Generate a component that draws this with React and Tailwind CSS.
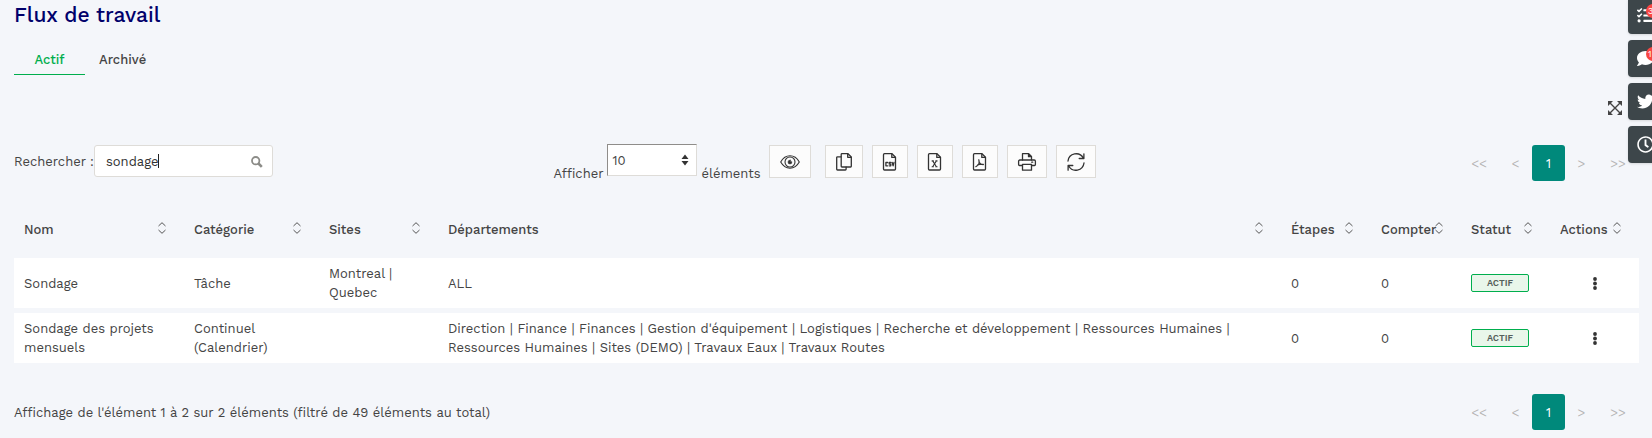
import React from "react";
import { FaTasks, FaComment, FaTwitter, FaRegClock } from "react-icons/fa";

const columns = [
  { label: "Nom", width: "w-[170px]" },
  { label: "Catégorie", width: "w-[135px]" },
  { label: "Sites", width: "w-[119px]" },
  { label: "Départements", width: "" },
  { label: "Étapes", width: "w-[90px]" },
  { label: "Compter", width: "w-[90px]" },
  { label: "Statut", width: "w-[89px]" },
  { label: "Actions", width: "w-[89px]" },
];

const rows = [
  {
    name: "Sondage",
    category: "Tâche",
    sites: "Montreal | Quebec",
    departments: "ALL",
    steps: 0,
    count: 0,
    status: "ACTIF",
  },
  {
    name: "Sondage des projets mensuels",
    category: "Continuel (Calendrier)",
    sites: "",
    departments:
      "Direction | Finance | Finances | Gestion d'équipement | Logistiques | Recherche et développement | Ressources Humaines | Ressources Humaines | Sites (DEMO) | Travaux Eaux | Travaux Routes",
    steps: 0,
    count: 0,
    status: "ACTIF",
  },
];

function Icon({ children, className = "h-5 w-5", box = "0 0 20 20", width = 1.3 }) {
  return (
    <svg
      viewBox={box}
      className={className}
      fill="none"
      stroke="currentColor"
      strokeWidth={width}
      strokeLinecap="round"
      strokeLinejoin="round"
      aria-hidden="true"
    >
      {children}
    </svg>
  );
}

const page = (
  <>
    <path d="M4.500 1.700h7.500l3.500 3.500v11.800a1 1 0 0 1-1 1h-10a1 1 0 0 1-1-1V2.700a1 1 0 0 1 1-1z" />
    <path d="M11.800 1.900v3.500h3.500" />
  </>
);

const tools = [
  {
    label: "Visibilité des colonnes",
    size: "w-[42px] mr-[5px]",
    icon: (
      <Icon width={1.1}>
        <path d="M.7 10C3 6 6.300 3.800 10 3.800S17 6 19.300 10C17 14 13.700 16.200 10 16.200S3 14 .7 10z" />
        <circle cx="10" cy="10" r="5" />
        <path d="M10.300 8.200a1.900 1.900 0 1 0 1.500 1.500c-.8.300-1.700-.5-1.500-1.500z" fill="currentColor" strokeWidth=".6" />
      </Icon>
    ),
  },
  {
    label: "Copier",
    size: "w-[38px]",
    icon: (
      <Icon>
        <path d="M8 1.700h6l3.300 3.300v9.300a.7.7 0 0 1-.7.7H8a.8.8 0 0 1-.8-.8V2.500A.8.8 0 0 1 8 1.700z" />
        <path d="M13.700 1.900v3.400h3.400" />
        <path d="M7 4.800H3.500a.8.8 0 0 0-.8.8v11.600a.8.8 0 0 0 .8.8h7.800a.8.8 0 0 0 .8-.8v-2" />
      </Icon>
    ),
  },
  {
    label: "Exporter en CSV",
    size: "w-9",
    icon: (
      <Icon>
        {page}
        <path d="M7.600 10.500H5.900v3.300h1.700M10.800 10.500H9.200v1.600h1.600v1.700H9.200M12.200 10.500l.9 3.300.9-3.300" />
      </Icon>
    ),
  },
  {
    label: "Exporter en Excel",
    size: "w-9",
    icon: (
      <Icon>
        {page}
        <path d="M7.700 8.900l3.700 5.800M11.400 8.900l-3.700 5.800M7.100 8.900h1.300M10.800 8.900h1.300M7.100 14.700h1.300M10.800 14.700h1.300" strokeWidth="1.1" />
      </Icon>
    ),
  },
  {
    label: "Exporter en PDF",
    size: "w-9",
    icon: (
      <Icon>
        {page}
        <path d="M8.800 7.700c1 3 .2 5.300-3 7M9 9.900c.8 1.800 2 2.700 4.300 2.700M7.700 12.900c1.800-.6 3.500-.9 5.700-.5" strokeWidth="1.2" />
      </Icon>
    ),
  },
  {
    label: "Imprimer",
    size: "w-10",
    icon: (
      <Icon>
        <path d="M5.500 8V1.700h6.200l2.800 2.800V8M11.500 1.900v2.800h2.800" />
        <path d="M5.500 13.500H2.600a1 1 0 0 1-1-1V9.200A1.200 1.200 0 0 1 2.800 8h14.400a1.200 1.200 0 0 1 1.200 1.200v3.300a1 1 0 0 1-1 1h-2.900" />
        <path d="M5.500 12.300h9v5.900h-9zM14.700 10.200h1" />
      </Icon>
    ),
  },
  {
    label: "Actualiser",
    size: "w-10",
    icon: (
      <Icon>
        <path d="M2 9a8.200 8.200 0 0 1 15.300-3M17.900 1.800v4.700h-4.700" />
        <path d="M18 11a8.200 8.200 0 0 1-15.300 3M2.100 18.200v-4.700h4.700" />
      </Icon>
    ),
  },
];

function Pagination({ label }) {
  const item = "h-9 text-center text-[#b4b4b4]";
  return (
    <nav aria-label={label} className="flex justify-end pr-px">
      <button type="button" aria-label="Première page" className={`${item} w-10`}>&lt;&lt;</button>
      <button type="button" aria-label="Page précédente" className={`${item} w-[33px]`}>&lt;</button>
      <button type="button" aria-current="page" className="h-9 w-[33px] rounded-[3px] bg-[#00897b] text-center text-white">1</button>
      <button type="button" aria-label="Page suivante" className={`${item} w-[33px]`}>&gt;</button>
      <button type="button" aria-label="Dernière page" className={`${item} w-10`}>&gt;&gt;</button>
    </nav>
  );
}

function SideButton({ label, badge, children }) {
  return (
    <button
      type="button"
      aria-label={label}
      className="relative flex h-[37px] w-11 items-center rounded-[4px] bg-[#3d464a] pl-[9px] text-white shadow"
    >
      {children}
      {badge && (
        <span className="absolute left-[18px] top-[7px] h-[14px] w-[14px] rounded-full bg-[#f94743] pl-[2px] text-left text-[9px] leading-[14px]">
          {badge}
        </span>
      )}
    </button>
  );
}

export default function App() {
  return (
    <div className="relative min-h-screen overflow-hidden bg-[#f4f6fa] pb-2 pl-[14px] pr-[13px] font-['Work_Sans','Inter',sans-serif] text-[13px] leading-[19px] text-[#444]">
      <h1 className="pt-px text-[21px] font-medium leading-7 text-[#00006b]">Flux de travail</h1>

      <div role="tablist" className="mt-[17px] flex">
        <button type="button" role="tab" aria-selected="true" className="w-[71px] border-b border-[#00ae4d] py-1 text-center font-medium leading-5 text-[#00ae4d]">
          Actif
        </button>
        <button type="button" role="tab" aria-selected="false" className="border-b border-transparent px-[14px] py-1 font-medium leading-5">
          Archivé
        </button>
      </div>

      <div className="mt-6 flex justify-end pr-4">
        <button type="button" aria-label="Plein écran" className="flex h-[17px] w-4 items-center justify-center">
          <svg viewBox="0 0 14 14" className="h-[14px] w-[14px]" aria-hidden="true">
            <path d="M0 0h5L0 5zM14 0v5L9 0zM0 14V9l5 5zM14 14H9l5-5z" fill="currentColor" />
            <path d="M2 2l10 10M12 2L2 12" stroke="currentColor" strokeWidth="1.400" />
          </svg>
        </button>
      </div>

      <div className="mt-7 grid grid-cols-[1fr_auto_1fr]">
        <div className="flex h-[34px] items-center">
          <label htmlFor="search">Rechercher :</label>
          <div className="relative">
            <input
              id="search"
              type="text"
              defaultValue="sondage"
              className="block h-8 w-[179px] rounded-[3px] border border-[#dedcd8] bg-white pl-[11px] pr-9 text-[#333] outline-none"
            />
            <span className="absolute left-[64px] top-[9px] h-[14px] w-px bg-[#222]" />
            <svg viewBox="0 0 12 12" className="absolute right-[10px] top-[11px] h-3 w-3" fill="none" stroke="#8c8c88" aria-hidden="true">
              <circle cx="4.700" cy="4.700" r="3.700" strokeWidth="1.800" />
              <path d="M7.500 7.500l3.300 3.300" strokeWidth="2.600" />
            </svg>
          </div>
        </div>

        <div className="flex">
          <div className="flex items-start">
            <label htmlFor="length" className="mr-1 mt-5">Afficher</label>
            <div className="relative">
              <select
                id="length"
                defaultValue="10"
                className="block h-8 w-[90px] appearance-none border border-b-[#dedcd8] border-l-[#8f8d8a] border-r-[#dedcd8] border-t-[#8f8d8a] bg-white pl-1 text-[#444] outline-none"
              >
                <option value="10">10</option>
                <option value="25">25</option>
                <option value="50">50</option>
              </select>
              <svg viewBox="0 0 8 12" className="pointer-events-none absolute right-2 top-[10px] h-3 w-2" fill="#333" aria-hidden="true">
                <path d="M4 .5l3.500 4.500h-7zM4 11.500L.5 7h7z" />
              </svg>
            </div>
            <span className="ml-1 mt-5">éléments</span>
          </div>
          <div className="ml-2 mr-1 mt-px flex gap-[9px]">
            {tools.map((tool) => (
              <button
                key={tool.label}
                type="button"
                aria-label={tool.label}
                className={`flex h-[33px] items-center justify-center border border-[#dedcd8] bg-[#fcfcfc] text-[#333] ${tool.size}`}
              >
                {tool.icon}
              </button>
            ))}
          </div>
        </div>

        <div className="pt-px">
          <Pagination label="Pagination supérieure" />
        </div>
      </div>

      <table className="mt-[17px] w-full table-fixed border-separate border-spacing-x-0 border-spacing-y-[5px]">
        <thead>
          <tr>
            {columns.map((column) => (
              <th key={column.label} scope="col" className={`h-12 p-0 pl-[10px] text-left font-medium ${column.width}`}>
                <button type="button" className="relative block w-full text-left">
                  {column.label}
                  <svg viewBox="0 0 8 12" className="absolute right-[18px] top-[2px] h-3 w-2" fill="none" stroke="#555" strokeWidth="1" aria-hidden="true">
                    <path d="M.5 4L4 .7 7.500 4M.5 8L4 11.300 7.500 8" />
                  </svg>
                </button>
              </th>
            ))}
          </tr>
        </thead>
        <tbody>
          {rows.map((row) => (
            <tr key={row.name} className="bg-white">
              <td className="py-[6px] pl-[10px] pr-3">{row.name}</td>
              <td className="py-[6px] pl-[10px] pr-3">{row.category}</td>
              <td className="py-[6px] pl-[10px] pr-3">{row.sites}</td>
              <td className="py-[6px] pl-[10px] pr-3">{row.departments}</td>
              <td className="py-[6px] pl-[10px]">{row.steps}</td>
              <td className="py-[6px] pl-[10px]">{row.count}</td>
              <td className="py-[6px] pl-[10px]">
                <span className="flex h-[18px] w-[58px] items-center justify-center rounded-[2px] border border-[#00ae4d] bg-[#e9f6ea] text-[9px] font-semibold leading-none text-[#55605a]">
                  {row.status}
                </span>
              </td>
              <td className="py-[6px]">
                <button type="button" aria-label={`Actions pour ${row.name}`} className="mx-auto block p-[3px]">
                  <svg viewBox="0 0 4 13" className="h-[13px] w-1" fill="#333" aria-hidden="true">
                    <circle cx="2" cy="2" r="1.900" />
                    <circle cx="2" cy="6.500" r="1.900" />
                    <circle cx="2" cy="11" r="1.900" />
                  </svg>
                </button>
              </td>
            </tr>
          ))}
        </tbody>
      </table>

      <div className="mt-[26px] flex items-center justify-between">
        <p>Affichage de l'élément 1 à 2 sur 2 éléments (filtré de 49 éléments au total)</p>
        <Pagination label="Pagination inférieure" />
      </div>

      <aside className="absolute right-0 top-0 -mt-[3px] flex w-6 flex-col gap-[6px]">
        <SideButton label="Tâches" badge="3">
          <FaTasks className="h-[17px] w-[17px]" />
        </SideButton>
        <SideButton label="Messages" badge="1">
          <FaComment className="h-[17px] w-[17px]" />
        </SideButton>
        <SideButton label="Twitter">
          <FaTwitter className="h-[17px] w-[17px]" />
        </SideButton>
        <SideButton label="Historique">
          <FaRegClock className="h-[17px] w-[17px]" />
        </SideButton>
      </aside>
    </div>
  );
}
